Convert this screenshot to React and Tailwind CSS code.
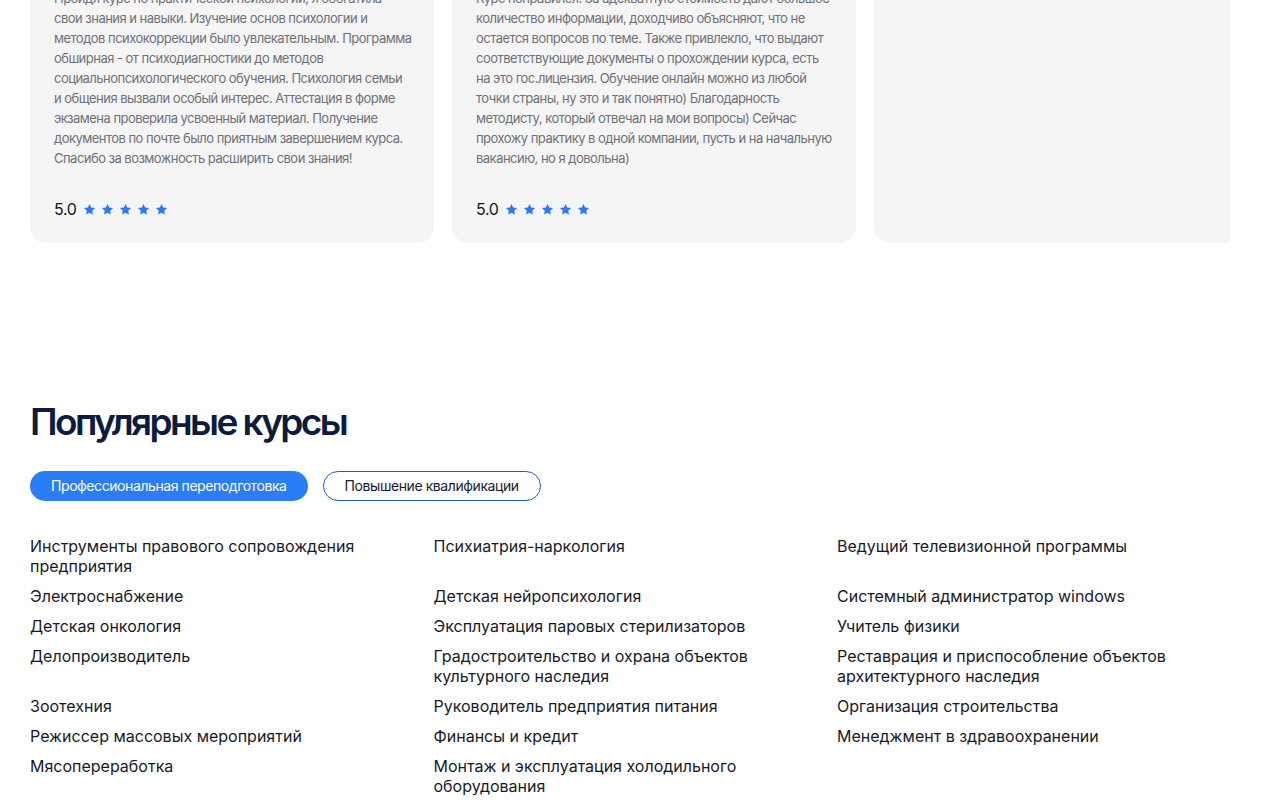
import React from 'react';

const reviews = [
    {
        lines: [
            'Пройдя курс по практической психологии, я обогатила',
            'свои знания и навыки. Изучение основ психологии и',
            'методов психокоррекции было увлекательным. Программа',
            'обширная - от психодиагностики до методов',
            'социальнопсихологического обучения. Психология семьи',
            'и общения вызвали особый интерес. Аттестация в форме',
            'экзамена проверила усвоенный материал. Получение',
            'документов по почте было приятным завершением курса.',
            'Спасибо за возможность расширить свои знания!',
        ],
        rating: '5.0',
    },
    {
        lines: [
            'Курс понравился. За адекватную стоимость дают большое',
            'количество информации, доходчиво объясняют, что не',
            'остается вопросов по теме. Также привлекло, что выдают',
            'соответствующие документы о прохождении курса, есть',
            'на это гос.лицензия. Обучение онлайн можно из любой',
            'точки страны, ну это и так понятно) Благодарность',
            'методисту, который отвечал на мои вопросы) Сейчас',
            'прохожу практику в одной компании, пусть и на начальную',
            'вакансию, но я довольна)',
        ],
        rating: '5.0',
    },
    { lines: [], rating: null },
];

const courses = [
    'Инструменты правового сопровождения предприятия',
    'Психиатрия-наркология',
    'Ведущий телевизионной программы',
    'Электроснабжение',
    'Детская нейропсихология',
    'Системный администратор windows',
    'Детская онкология',
    'Эксплуатация паровых стерилизаторов',
    'Учитель физики',
    'Делопроизводитель',
    'Градостроительство и охрана объектов культурного наследия',
    'Реставрация и приспособление объектов архитектурного наследия',
    'Зоотехния',
    'Руководитель предприятия питания',
    'Организация строительства',
    'Режиссер массовых мероприятий',
    'Финансы и кредит',
    'Менеджмент в здравоохранении',
    'Мясопереработка',
    'Монтаж и эксплуатация холодильного оборудования',
];

const Star = () => (
    <svg width="13" height="13" viewBox="0 0 24 24" className="shrink-0">
        <path
            fill="#2a7af3"
            d="M12 1.8l3.1 6.6 7.2.9-5.3 5 1.4 7.1L12 17.9l-6.4 3.5 1.4-7.1-5.3-5 7.2-.9z"
        />
    </svg>
);

const ReviewCard = ({ review }) => (
    <div className="w-[404px] shrink-0 h-[279px] bg-[#f5f5f6] rounded-2xl px-6 pt-6 pb-[22px] flex flex-col">
        {review.lines.length > 0 && (
            <p className="text-[13px] leading-5 tracking-[-0.04em] text-[#707078]">
                {review.lines.map((l, i) => (
                    <span key={i} className="block whitespace-nowrap">{l}</span>
                ))}
            </p>
        )}
        {review.rating && (
            <div className="mt-auto flex items-center gap-[5px]">
                <span className="text-base leading-6 tracking-[-0.02em] text-[#111318] mr-[1px]">{review.rating}</span>
                <div className="flex items-center gap-[5px]">
                    <Star />
                    <Star />
                    <Star />
                    <Star />
                    <Star />
                </div>
            </div>
        )}
    </div>
);

const App = () => {
    return (
        <div className="bg-white min-h-[810px] font-['Inter','Noto_Sans',sans-serif] pb-10">
            <div className="-mt-[36px] mx-[30px] w-[1200px] overflow-hidden">
                <div className="flex gap-[18px]">
                    {reviews.map((r, i) => (
                        <ReviewCard key={i} review={r} />
                    ))}
                </div>
            </div>

            <section className="mx-[30px] mt-[159px]">
                <h2 className="text-[37px] leading-10 font-semibold tracking-[-0.07em] text-[#0d1b3e]">
                    Популярные курсы
                </h2>
                <div className="flex gap-[15px] mt-[29px]">
                    <button className="h-[30px] px-[21px] rounded-full bg-[#2b7df6] text-white text-[14px] leading-5 tracking-[-0.03em]">
                        Профессиональная переподготовка
                    </button>
                    <button className="h-[30px] px-[21px] rounded-full border border-[#2360b4] text-[#161b2b] text-[14px] leading-5 tracking-[-0.03em]">
                        Повышение квалификации
                    </button>
                </div>
                <div className="grid grid-cols-[393px_393px_393px] gap-x-[10.5px] gap-y-[10px] mt-[35px]">
                    {courses.map((c) => (
                        <a key={c} className="text-base leading-5 text-[#171a26]">
                            {c}
                        </a>
                    ))}
                </div>
            </section>
        </div>
    );
};

export default App;
